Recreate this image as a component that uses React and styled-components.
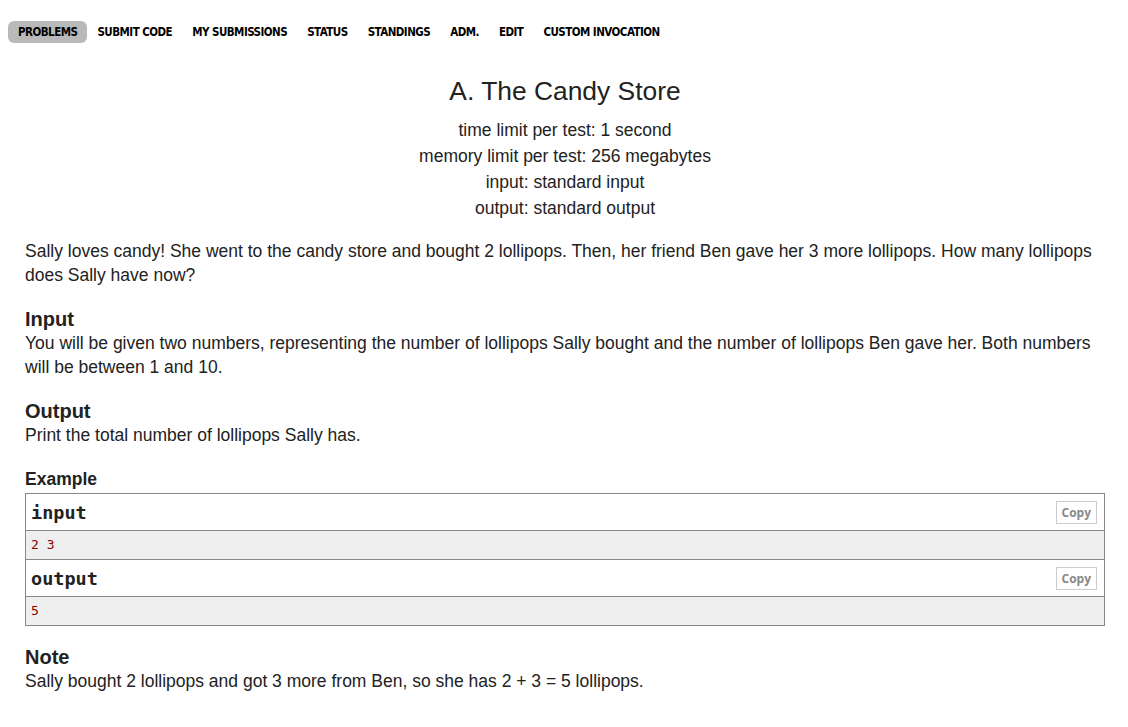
import React from 'react';
import styled, { createGlobalStyle } from 'styled-components';

const GlobalStyle = createGlobalStyle`
  html, body {
    margin: 0;
    padding: 0;
    background: #fff;
  }
  body {
    font-family: "Liberation Sans", Arial, sans-serif;
    color: #222;
  }
`;

const Page = styled.div`
  width: 1128px;
  height: 727px;
  overflow: hidden;
  box-sizing: border-box;
`;

const Menu = styled.ul`
  display: flex;
  align-items: center;
  list-style: none;
  margin: 0;
  padding: 21px 0 0 8px;
`;

const MenuItem = styled.li`
  font-family: "DejaVu Sans Condensed", "Liberation Sans Narrow", sans-serif;
  font-weight: bold;
  font-size: 11.5px;
  letter-spacing: -0.53px;
  color: #000;
  height: 22px;
  line-height: 23px;
  padding: 0 10px;
  border-radius: 6px;
  background: ${p => (p.$active ? '#b9b9b9' : 'transparent')};
`;

const Statement = styled.div`
  margin: 0 23px 0 25px;
`;

const Header = styled.div`
  text-align: center;
  margin-top: 30px;
`;

const Title = styled.div`
  font-size: 26.4px;
  line-height: 36px;
  margin-bottom: 8px;
`;

const HeaderLine = styled.div`
  font-size: 17.5px;
  line-height: 26px;
`;

const Para = styled.p`
  font-size: 17.5px;
  line-height: 24px;
  margin: 0;
`;

const Intro = styled(Para)`
  margin-top: 18px;
`;

const Section = styled.div`
  margin-top: ${p => p.$top || 20}px;
`;

const SectionTitle = styled.div`
  font-weight: bold;
  font-size: ${p => p.$size || 20}px;
  line-height: 24px;
`;

const SampleBox = styled.div`
  border: 1px solid #888;
  margin-top: 2px;
`;

const SampleHead = styled.div`
  display: flex;
  justify-content: space-between;
  align-items: center;
  height: 36px;
  padding: 0 7px 0 5px;
  border-top: ${p => (p.$first ? 'none' : '1px solid #888')};
  border-bottom: 1px solid #888;
  font-family: "DejaVu Sans Mono", "Liberation Mono", monospace;
  font-weight: bold;
  font-size: 18.5px;
  color: #222;
`;

const CopyButton = styled.span`
  font-family: "Open Sans", "Liberation Sans", sans-serif;
  font-weight: bold;
  font-size: 12px;
  color: #888;
  border: 1px solid #ccc;
  padding: 2px 5px;
  line-height: 17px;
`;

const SampleData = styled.pre`
  margin: 0;
  background: #efefef;
  height: 28px;
  line-height: 28px;
  padding: 0 5px;
  font-family: "DejaVu Sans Mono", "Liberation Mono", monospace;
  font-size: 13px;
  color: #8b0000;
`;

const tabs = ['Problems', 'Submit Code', 'My Submissions', 'Status', 'Standings', 'ADM.', 'Edit', 'Custom invocation'];

export default function App() {
  return (
    <Page>
      <GlobalStyle />
      <Menu>
        {tabs.map((t, i) => (
          <MenuItem key={t} $active={i === 0}>{t.toUpperCase()}</MenuItem>
        ))}
      </Menu>
      <Statement>
        <Header>
          <Title>A. The Candy Store</Title>
          <HeaderLine>time limit per test: 1 second</HeaderLine>
          <HeaderLine>memory limit per test: 256 megabytes</HeaderLine>
          <HeaderLine>input: standard input</HeaderLine>
          <HeaderLine>output: standard output</HeaderLine>
        </Header>
        <Intro>
          Sally loves candy! She went to the candy store and bought 2 lollipops. Then, her friend Ben gave her 3 more lollipops. How many lollipops does Sally have now?
        </Intro>
        <Section>
          <SectionTitle>Input</SectionTitle>
          <Para>
            You will be given two numbers, representing the number of lollipops Sally bought and the number of lollipops Ben gave her. Both numbers will be between 1 and 10.
          </Para>
        </Section>
        <Section>
          <SectionTitle>Output</SectionTitle>
          <Para>Print the total number of lollipops Sally has.</Para>
        </Section>
        <Section $top={20}>
          <SectionTitle $size={17.5}>Example</SectionTitle>
          <SampleBox>
            <SampleHead $first>
              input
              <CopyButton>Copy</CopyButton>
            </SampleHead>
            <SampleData>2 3</SampleData>
            <SampleHead>
              output
              <CopyButton>Copy</CopyButton>
            </SampleHead>
            <SampleData>5</SampleData>
          </SampleBox>
        </Section>
        <Section $top={19}>
          <SectionTitle>Note</SectionTitle>
          <Para>Sally bought 2 lollipops and got 3 more from Ben, so she has 2 + 3 = 5 lollipops.</Para>
        </Section>
      </Statement>
    </Page>
  );
}
